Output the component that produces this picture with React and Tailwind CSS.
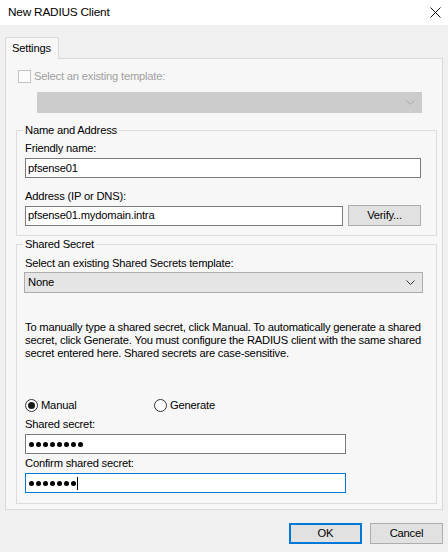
// App.jsx
// New RADIUS Client dialog — Windows 10 style

const Chevron = ({ className }) => (
  <svg width="9" height="5" viewBox="0 0 9 5" className={className} aria-hidden="true">
    <path d="M0.5 0.5 L4.5 4.5 L8.5 0.5" fill="none" stroke="currentColor" strokeWidth="1" />
  </svg>
);

const Dots = ({ count }) => (
  <div className="flex items-center gap-[2px]">
    {Array.from({ length: count }).map((_, i) => (
      <span key={i} className="block h-[5px] w-[5px] rounded-full bg-black" />
    ))}
  </div>
);

const Radio = ({ checked, label }) => (
  <label className="flex items-center gap-[3px]">
    <span className="flex h-[13px] w-[13px] items-center justify-center rounded-full border border-[#333333] bg-white">
      {checked && <span className="block h-[7px] w-[7px] rounded-full bg-[#1a1a1a]" />}
    </span>
    <span className="leading-[15px]">{label}</span>
  </label>
);

const TextBox = ({ value, className = '' }) => (
  <div className={`flex h-[20px] items-center border border-[#7a7a7a] bg-white px-[2px] leading-[15px] ${className}`}>
    {value}
  </div>
);

const Button = ({ children, focused }) => (
  <button
    className={`h-[21px] w-[73px] bg-[#e1e1e1] leading-[15px] ${
      focused ? 'border-2 border-[#0078d7]' : 'border border-[#adadad]'
    }`}
  >
    {children}
  </button>
);

export default function App() {
  return (
    <div className="h-[552px] w-[448px] overflow-hidden bg-[#f0f0f0] font-[family-name:'Liberation_Sans',Arial,sans-serif] text-[11.2px] tracking-[-0.2px] text-black">
      {/* başlık çubuğu */}
      <div className="flex h-[25px] items-center justify-between bg-white pl-[8px] pr-[7px]">
        <span className="text-[11.8px] leading-[15px]">New RADIUS Client</span>
        <svg width="11" height="11" viewBox="0 0 11 11" aria-hidden="true">
          <path d="M0.5 0.5 L10.5 10.5 M10.5 0.5 L0.5 10.5" stroke="#111" strokeWidth="1" />
        </svg>
      </div>

      <div className="px-[5px] pt-[12px]">
        {/* sekme */}
        <div className="relative z-10 -mb-px flex h-[22px] w-[54px] items-center border border-b-0 border-[#d9d9d9] bg-[#f7f7f7] pl-[6px] leading-[15px]">
          Settings
        </div>

        {/* panel */}
        <div className="h-[452px] w-[438px] border border-[#d9d9d9] bg-[#f7f7f7]">
          <div className="ml-[12px] mt-[11px] flex items-center gap-[3px] text-[#a0a0a0]">
            <span className="block h-[13px] w-[13px] border border-[#c4c4c4] bg-[#fbfbfb]" />
            <span className="leading-[13px]">Select an existing template:</span>
          </div>
          <div className="ml-[31px] mt-[9px] flex h-[21px] w-[385px] items-center justify-end bg-[#cccccc] pr-[7px] text-[#a8a8a8]">
            <Chevron />
          </div>

          <fieldset className="ml-[10px] mt-[10px] w-[421px] border border-[#dcdcdc] pl-[6px] pb-[9px]">
            <legend className="px-[2px] leading-[15px]">Name and Address</legend>
            <div className="ml-[2px] mt-[3px] leading-[15px]">Friendly name:</div>
            <TextBox value="pfsense01" className="ml-[2px] mt-[2px] w-[396px]" />
            <div className="ml-[2px] mt-[11px] leading-[15px]">Address (IP or DNS):</div>
            <div className="ml-[2px] mt-[1px] flex items-center gap-[5px]">
              <TextBox value="pfsense01.mydomain.intra" className="w-[318px]" />
              <Button>Verify...</Button>
            </div>
          </fieldset>

          <fieldset className="ml-[10px] mt-[1px] w-[421px] border border-[#dcdcdc] pl-[6px] pb-[10px]">
            <legend className="px-[2px] leading-[15px]">Shared Secret</legend>
            <div className="ml-[2px] mt-[4px] leading-[15px]">Select an existing Shared Secrets template:</div>
            <div className="ml-[1px] mt-[1px] flex h-[21px] w-[399px] items-center justify-between border border-[#acacac] bg-[#e5e5e5] pl-[3px] pr-[7px]">
              <span className="leading-[15px]">None</span>
              <Chevron className="text-[#333]" />
            </div>
            <p className="ml-[2px] mt-[28px] w-[405px] leading-[13px]">
              To manually type a shared secret, click Manual. To automatically generate a shared
              <br />
              secret, click Generate. You must configure the RADIUS client with the same shared
              <br />
              secret entered here. Shared secrets are case-sensitive.
            </p>
            <div className="ml-[2px] mt-[38px] flex items-center">
              <div className="w-[129px]">
                <Radio checked label="Manual" />
              </div>
              <Radio label="Generate" />
            </div>
            <div className="ml-[2px] mt-[4px] leading-[15px]">Shared secret:</div>
            <div className="ml-[2px] mt-[2px] flex h-[20px] w-[321px] items-center border border-[#7a7a7a] bg-white px-[3px]">
              <Dots count={8} />
            </div>
            <div className="ml-[2px] mt-[2px] leading-[15px]">Confirm shared secret:</div>
            <div className="ml-[2px] mt-[2px] flex h-[20px] w-[321px] items-center border border-[#0078d7] bg-white px-[3px]">
              <Dots count={7} />
              <span className="ml-[1px] block h-[13px] w-px bg-black" />
            </div>
          </fieldset>
        </div>

        {/* alt butonlar */}
        <div className="mt-[13px] flex justify-end gap-[8px]">
          <Button focused>OK</Button>
          <Button>Cancel</Button>
        </div>
      </div>
    </div>
  );
}
